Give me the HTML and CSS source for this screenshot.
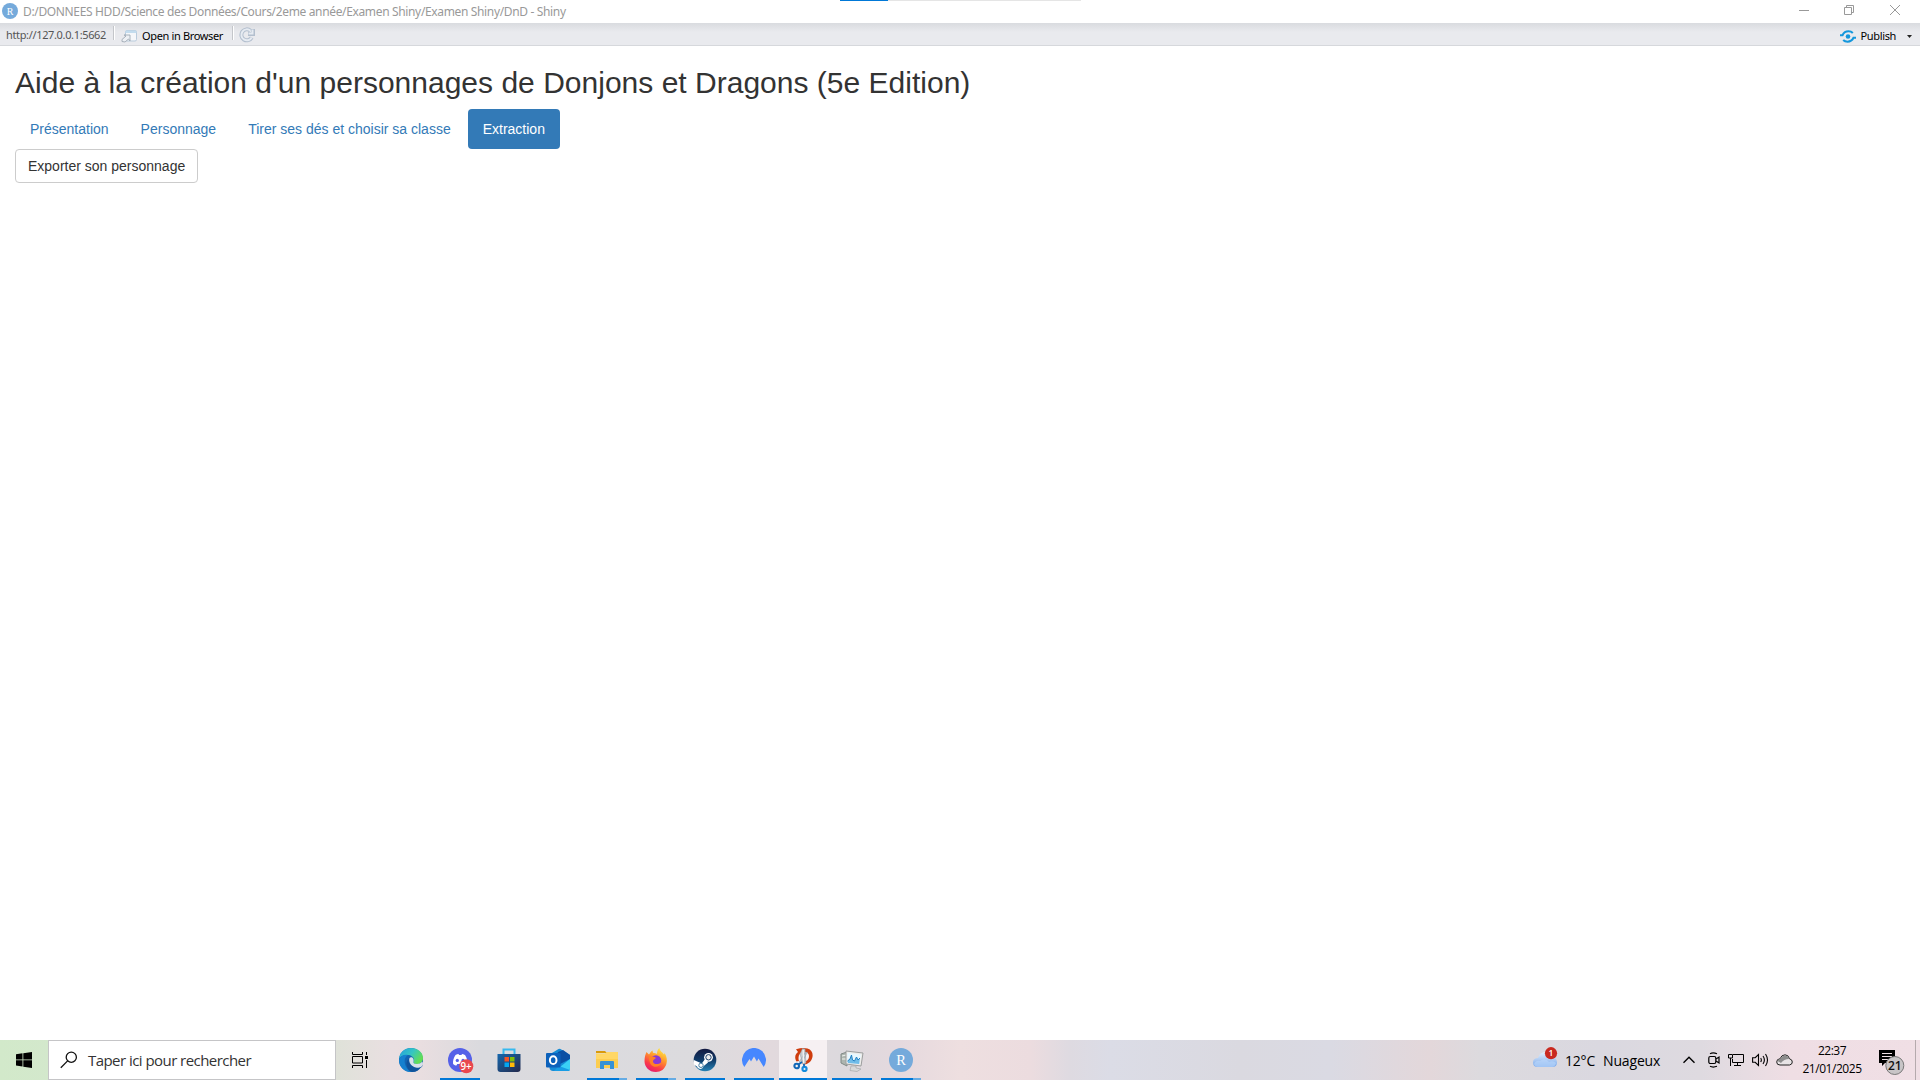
FILE: index.html
```html
<!DOCTYPE html>
<html lang="fr">
<head>
<meta charset="utf-8">
<title>DnD - Shiny</title>
<link rel="stylesheet" href="styles.css">
</head>
<body>
<div class="capture-bar"></div>
<header class="titlebar">
  <svg class="app-icon" width="16" height="16" viewBox="0 0 16 16"><circle cx="8" cy="8" r="8" fill="#75aadb"/><text x="8" y="11.6" text-anchor="middle" class="r-letter" font-size="10">R</text></svg>
  <span class="window-title">D:/DONNEES HDD/Science des Données/Cours/2eme année/Examen Shiny/Examen Shiny/DnD - Shiny</span>
  <div class="window-buttons">
    <svg width="45" height="20" viewBox="0 0 45 20"><path d="M17 10.500h10" stroke="#999"/></svg>
    <svg width="45" height="20" viewBox="0 0 45 20" fill="none" stroke="#999"><path d="M17.500 7.500h7v7h-7zM19.500 7.500v-2h7v7h-2"/></svg>
    <svg width="45" height="20" viewBox="0 0 45 20"><path d="M18 5l10 10M28 5l-10 10" stroke="#999"/></svg>
  </div>
</header>
<div class="toolbar">
  <span class="address">http://127.0.0.1:5662</span>
  <i class="separator"></i>
  <svg class="open-icon" width="17" height="14" viewBox="0 0 17 14"><rect x="4.500" y="1.500" width="11" height="10.500" rx="1.500" fill="#f5f7fa" stroke="#b9cbdc"/><path d="M4.500 4V2.500q0-1 1-1h9q1 0 1 1V4z" fill="#c3dcee"/><path d="M1 12.500v-2l4-3.500-2-1h6v6l-1.500-2-3.500 3z" fill="#edf0f4" stroke="#9fa9b4" stroke-width=".9"/></svg>
  <span class="open-label">Open in Browser</span>
  <i class="separator second"></i>
  <svg class="reload-icon" width="16" height="16" viewBox="0 0 16 16" fill="none"><path d="M12.700 10.500A5.500 5.500 0 1 1 11.500 3.700M14 2v5H9" stroke="#b3bfce" stroke-width="4"/><path d="M12.700 10.500A5.500 5.500 0 1 1 11.500 3.700M13.500 2.500v4H9.500" stroke="#e6ebf2" stroke-width="2"/></svg>
  <div class="publish">
    <svg width="16" height="13" viewBox="0 0 16 13"><circle cx="8" cy="6.500" r="2.300" fill="#1497dc"/><path d="M0 5.200h2.500C3.800 2.500 6 1.300 8.500 1.300c2 0 3.200.6 4.300 1.700M16 7.800h-2.500C12.200 10.500 10 11.700 7.500 11.700c-2 0-3.200-.6-4.300-1.700" fill="none" stroke="#1497dc" stroke-width="2.100"/></svg>
    <span>Publish</span>
    <svg class="caret" width="5" height="3" viewBox="0 0 5 3"><path d="M0 0h5L2.500 3z" fill="#222"/></svg>
  </div>
</div>
<main class="page">
  <h2>Aide à la création d'un personnages de Donjons et Dragons (5e Edition)</h2>
  <nav class="pills">
    <a>Présentation</a><a>Personnage</a><a>Tirer ses dés et choisir sa classe</a><a class="active">Extraction</a>
  </nav>
  <button class="export">Exporter son personnage</button>
</main>
<footer class="taskbar">
  <div class="start"><svg width="16" height="16" viewBox="0 0 16 16"><path d="M0 2.200L6.500 1.300V7.500H0zM7.300 1.200L16 0v7.500H7.300zM0 8.300h6.500v6.200L0 13.600zM7.300 8.300H16V16L7.300 14.700z"/></svg></div>
  <div class="search"><svg width="18" height="18" viewBox="0 0 18 18" fill="none" stroke="#111" stroke-width="1.300"><circle cx="11.300" cy="6.200" r="5.100"/><path d="M7.600 9.900L.8 16.700"/></svg><span>Taper ici pour rechercher</span></div>
  <div class="task-view"><svg width="16" height="16" viewBox="0 0 16 16" fill="none" stroke="#000"><path d="M.5 0v2.500h10V0M.5 4.500h10v6.500H.5zM.5 16v-2.500h10V16M14.500 0v3M14.500 8v8"/><path d="M13 4h3v3h-3z" fill="#000" stroke="none"/></svg></div>
  <div class="apps">
    <div class="app"><svg width="24" height="24" viewBox="0 0 24 24"><defs><linearGradient id="e1" x1="0" y1="0" x2="1" y2=".5"><stop stop-color="#239fe0"/><stop offset=".55" stop-color="#35c5c3"/><stop offset="1" stop-color="#62dd55"/></linearGradient></defs><circle cx="12" cy="12" r="12" fill="#1265b3"/><path d="M0 11C.5 4.500 5.500 0 12 0c7 0 12 4.500 12 10 0 4-3 6-6 6-2.500 0-4-1-3.500-2.300C16 11 14 7.500 9.500 7 5 6.500 1.500 8 0 11z" fill="url(#e1)"/><path d="M0 12c1-4 5-6 9-5-3 2-4 5-3 9 1 4 4 7.500 7 7.900C5 24.500-.3 18 0 12z" fill="#1580cf"/><path d="M11 10c-2.500 5 2 10 8 10 1.500 0 3-.5 4-1l.6-2c-1.500 1-3.500 1.600-6 1.500-3 0-4-1.200-3.500-2.500.6-1.500-.5-3.500-3.100-6z" fill="#10549c"/><path d="M10.500 10c2-1.800 5 .5 4 3.700-.5 1.300 1 2.300 3.500 2.300 2 0 3.800-.8 5-2.200L24 15l-1.200 3.500c-1.500 1-3 1.500-4.800 1.300-5.500-.5-9-6-7.500-9.800z" fill="#d7e0ea"/><path d="M10 10.500c-1.500 4 2 9 7.500 9.500 2 .2 3.700-.4 4.700-1-2 3-4.700 5-9.200 5-5-1.500-8-10-3-13.500z" fill="#10549c"/></svg></div>
    <div class="app running"><svg class="discord" width="26" height="26" viewBox="0 0 26 26"><circle cx="12" cy="12" r="12" fill="#5561e8"/><path d="M7.500 7q2-1 3-.9l.5 1h2.500l.5-1q1 0 3 .9c2 3 2.700 6 2.300 9-1.500 1.100-2.300 1.400-3.300 1.600l-.9-1.600H9.300l-.9 1.600c-1-.2-1.800-.5-3.300-1.600-.4-3 .4-6 2.400-9z" fill="#fff"/><circle cx="9.300" cy="12.400" r="1.600" fill="#5561e8"/><circle cx="15" cy="12.400" r="1.600" fill="#5561e8"/><circle cx="18.300" cy="18.300" r="7" fill="#e9484e"/><text x="18" y="21.800" text-anchor="middle" class="badge-text" font-size="9.800">9+</text></svg></div>
    <div class="app"><svg width="24" height="24" viewBox="0 0 24 24"><defs><linearGradient id="s1" x2="1" y2="1"><stop stop-color="#1567ad"/><stop offset="1" stop-color="#252a4c"/></linearGradient></defs><path d="M6.500 7V1.500h11V7" fill="none" stroke="#36b9ef" stroke-width="2"/><path d="M.5 6h23v15q0 3-3 3h-17q-3 0-3-3z" fill="url(#s1)"/><path d="M7.500 9H12v4.500H7.500z" fill="#f35325"/><path d="M13 9h4.500v4.500H13z" fill="#81bc06"/><path d="M7.500 14.500H12V19H7.500z" fill="#05a6f0"/><path d="M13 14.500h4.500V19H13z" fill="#ffba08"/></svg></div>
    <div class="app"><svg width="24" height="24" viewBox="0 0 24 24"><path d="M3.500 6.500L12.500 1q1-.5 2 0L24 7v13q0 3-3 3H7q-3 0-3.500-3z" fill="#168bd5"/><path d="M12 4l5-2 7 5v4l-10 5-6-4z" fill="#0a4fa4"/><path d="M24 11v9q0 3-3 3H9z" fill="#3ad0f6"/><path d="M13 18l11 4-1 1H8z" fill="#189de5"/><rect y="5" width="14.500" height="14.500" rx="1" fill="#0c61bb"/><ellipse cx="7.200" cy="12.200" rx="3.300" ry="3.900" fill="none" stroke="#fff" stroke-width="2"/></svg></div>
    <div class="app running stacked"><svg width="22" height="20" viewBox="0 0 22 20"><path d="M0 1h9l2 2H0z" fill="#d99a0b"/><path d="M0 3.500h9L11 2h11v16H0z" fill="#ffd766"/><path d="M0 9h22v9H0z" fill="#fccd50"/><path d="M4 19v-7q0-1 1-1h12q1 0 1 1v7h-4v-4H8v4z" fill="#3791d5"/></svg></div>
    <div class="app running stacked"><svg width="24" height="24" viewBox="0 0 24 24"><defs><linearGradient id="f1" x1=".8" y1="0" x2=".3" y2="1"><stop stop-color="#fff14a"/><stop offset=".4" stop-color="#ff9b2b"/><stop offset=".75" stop-color="#fb3c47"/><stop offset="1" stop-color="#e51b72"/></linearGradient></defs><path d="M2.500 4L5 6.500C6 5 7 3.500 8.500 2.500l.5 2.200C10.500 5 12 5 13 6c0-3 1-5 2.500-6 0 3 3 4 4.500 6.500l.6-1.500c2 3 3 7 1.800 11-1.500 5-5.500 8-10.500 8C5 24 .5 19 .5 13 .5 9 1.500 6 2.500 4z" fill="url(#f1)"/><circle cx="12" cy="12.500" r="5.200" fill="#8a38d5"/><path d="M5 9c4-.5 6 0 7 1-2 1.500-3 2-3 3.200 0 3 4 4 8.500 1.300-2 5.500-8.500 5.500-11 1.500C5.500 14 5 11 5 9z" fill="#ff8126"/></svg></div>
    <div class="app running"><svg width="24" height="24" viewBox="0 0 24 24"><defs><linearGradient id="t1" x2="0" y2="1"><stop stop-color="#11183f"/><stop offset=".5" stop-color="#103b69"/><stop offset="1" stop-color="#2783b5"/></linearGradient></defs><circle cx="12" cy="12" r="11.300" fill="url(#t1)"/><path d="M.8 12l8 3.500 4-5.500L15 14.500l-4.500 3.800c-1 4-5.500 3-6.500.2L.9 16.500z" fill="#fff"/><circle cx="8" cy="17.300" r="2.200" fill="none" stroke="#1f638f" stroke-width=".8"/><circle cx="15.500" cy="9.300" r="4.400" fill="#fff"/><circle cx="15.500" cy="9.300" r="2.700" fill="#eee" stroke="#173c68" stroke-width="1"/></svg></div>
    <div class="app running"><svg width="24" height="24" viewBox="0 0 24 24"><path d="M2.300 19A12 12 0 1 1 21.700 19L16.500 10.500 14.900 13.500 15.800 15 12 8.500 9 13.500 7.500 11z" fill="#4687ff"/></svg></div>
    <div class="app running focused"><svg width="24" height="24" viewBox="0 0 24 24"><g transform="translate(2 0)"><path d="M3 1.200Q10-.6 14.500.6c5 1.500 6 6 4.500 9.900-1.500 4-5 6-9 6L9 13.500c4 .5 7-1.500 7-5.500 0-3-3-4.500-6-4-3.500.6-5.500 4.500-4 9l-2.500.5C1 9 2.500 6 5 4z" fill="#cf3c0c"/><path d="M9.500.5L12 1l1 14-3 1.500L7 6zM14.500 4l-6 11-2.500-1 6-9z" fill="#c5c9cd" stroke="#8d969e" stroke-width=".5"/><path d="M10.200 2l.3 13" stroke="#f0f2f3" stroke-width="1.300"/><circle cx="3.700" cy="18" r="2.300" fill="none" stroke="#1267b6" stroke-width="2.100"/><circle cx="11.500" cy="21" r="2.100" fill="none" stroke="#158bdd" stroke-width="2.100"/><path d="M5.500 16.500l3.500-2.500M11 18.500V16" stroke="#1267b6" stroke-width="1.800"/></g></svg></div>
    <div class="app running"><svg width="24" height="24" viewBox="0 0 24 24"><path d="M1 6l6-2v14l-6-3z" fill="#adb5af" stroke="#818a87"/><path d="M2 8l4-1M2 11h4" stroke="#eef2ed"/><path d="M6 3l17 2-2 13-15-2z" fill="#ededeb" stroke="#9c9e9e"/><path d="M7.500 5l13.500 1.500-1.500 9.500-12-1.500z" fill="#e8f8ff"/><path d="M7.500 13l2.500-2 1.500-4 1 5 2 1 2-4 1.500 3 2-2-.8 6-11.200-1z" fill="#6fbce8"/><path d="M7.500 13l2.500-2 1.500-4 1 5 2 1 2-4 1.500 3 2-2" fill="none" stroke="#2381c3"/><path d="M11 18h5v2l5 1-4 2.500-7-1z" fill="#d7d9d9" stroke="#a6a9aa" stroke-width=".7"/></svg></div>
    <div class="app running stacked"><svg width="24" height="24" viewBox="0 0 24 24"><circle cx="12" cy="12" r="12" fill="#75aadb"/><text x="12" y="17" text-anchor="middle" class="r-letter" font-size="14.500">R</text></svg></div>
  </div>
  <div class="tray">
    <div class="weather"><svg width="25" height="22" viewBox="0 0 25 22"><defs><linearGradient id="w1" x2="0" y2="1"><stop stop-color="#e5f1fd"/><stop offset="1" stop-color="#78a8eb"/></linearGradient></defs><path d="M5 20q-5 0-5-4.500T5 11q1.500-6 8-6 5 0 6.500 5Q24 11 24 15.500T19 20z" fill="url(#w1)"/><path d="M1 17q2-4 6-3 5-4 9 1 4-2 7 1-1 4-4 4H5q-3 0-4-3z" fill="#b8d5fa" opacity=".65"/><circle cx="18" cy="6.200" r="6.100" fill="#c92a20"/><text x="18" y="9.200" text-anchor="middle" class="badge-text" font-size="8.500">1</text></svg><span class="degrees">12°C</span><span class="condition">Nuageux</span></div>
    <svg class="chevron" width="12" height="8" viewBox="0 0 12 8"><path d="M.5 6.800L6 1.300l5.500 5.500" fill="none" stroke="#000" stroke-width="1.400"/></svg>
    <svg class="camera" width="12" height="16" viewBox="0 0 12 16" fill="none" stroke="#000" stroke-width="1.200"><rect x=".8" y="4.500" width="7" height="7" rx="1.500"/><path d="M8 7l3-2v6L8 9M2 1.700q3-1.500 7 0M2 14.300q3 1.500 7 0"/></svg>
    <svg class="network" width="16" height="14" viewBox="0 0 16 14" fill="none" stroke="#000"><path d="M5 1.500h10.500v8H4.500V6M9.500 9.500v3M6 12.500h7M.5 1.500h4V5h-4zM2.500 5v8"/></svg>
    <svg class="volume" width="17" height="14" viewBox="0 0 17 14" fill="none" stroke="#000" stroke-width="1.100"><path d="M.6 4.700h2.600L6.500 1.500v11L3.200 9.300H.6zM8.700 5q1.300 2 0 4M11 3q2.800 4 0 8M13.500 1q4 6 0 12"/></svg>
    <svg class="cloud" width="17" height="12" viewBox="0 0 17 12"><path d="M4 11Q.7 11 .7 8T4 4.800Q5.500.8 9 .8q3.500 0 4.500 4Q16.300 5.500 16.300 8T13.500 11z" fill="#e7e3e5" stroke="#222"/><path d="M1.500 7q1-2 3-2Q6 1.500 9 1.500q3 0 4 3.500-5 0-8 4z" fill="#8d8d8d"/></svg>
    <div class="clock"><span class="time">22:37</span><span class="date">21/01/2025</span></div>
    <svg class="notice" width="26" height="25" viewBox="0 0 26 25"><path d="M0 0h16v13H6l-3 3v-3H0z"/><path d="M3 3.500h10M3 6.500h10M3 9.500h7" stroke="#efdfe4"/><circle cx="15.800" cy="15.500" r="9" fill="#c8c5c7" stroke="#777"/><text x="15.800" y="19.800" text-anchor="middle" class="count" font-size="12">21</text></svg>
    <div class="desktop-edge"></div>
  </div>
</footer>
</body>
</html>
```
FILE: styles.css
```css
* { box-sizing: border-box; }
body { margin: 0; width: 1920px; height: 1080px; overflow: hidden; display: flex; flex-direction: column; background: #fff; color: #333; font-family: "Liberation Sans", Arial, sans-serif; }
svg { display: block; flex: none; }
span, a, button, h2 { white-space: nowrap; }
.capture-bar { position: absolute; top: 0; left: 840px; width: 241px; height: 1px; background: linear-gradient(90deg, #0078d7 48px, #e5e5e5 48px); }
.titlebar { height: 23px; display: flex; align-items: flex-start; padding: 0 3px 0 2px; font: 12px/23px "Noto Sans", sans-serif; color: #999; }
.app-icon { margin: 3px 5px 0 0; }
.window-title { letter-spacing: -.35px; }
.window-buttons { display: flex; margin-left: auto; }
.r-letter { font-family: "Liberation Serif", serif; fill: #fff; }
.badge-text { font-family: "Open Sans", sans-serif; font-weight: 600; fill: #fff; }
.count { font-family: "Open Sans", sans-serif; font-weight: 600; fill: #111; }
.toolbar { height: 23px; display: flex; align-items: flex-start; padding: 3px 6px 0; background: linear-gradient(#d9dbdf, #e9eaee 9px); border-bottom: 1px solid #d6d8dc; font: 11px/18px "Noto Sans", sans-serif; letter-spacing: -.35px; color: #000; }
.address { width: 107px; color: #555; }
.separator { width: 2px; height: 14px; background: #c4c6ca; border-right: 1px solid #fff; }
.open-icon { margin: 3px 4px 0 6px; }
.open-label { width: 90px; line-height: 20px; }
.reload-icon { margin: 1px 0 0 5px; }
.publish { display: flex; align-items: center; margin-left: auto; gap: 4px; line-height: 20px; }
.publish .caret { margin: 0 2px 0 7px; }
.page { flex: 1; display: flex; flex-direction: column; align-items: flex-start; padding: 20px 15px 0; }
h2 { margin: 0 0 10px; font-size: 30px; line-height: 33px; font-weight: 500; letter-spacing: .01px; }
.pills { display: flex; gap: 2px; }
.pills a { padding: 10px 15px; border-radius: 4px; font-size: 14px; line-height: 20px; color: #337ab7; }
.pills .active { background: #337ab7; color: #fff; }
.export { height: 34px; padding: 6px 12px; border: 1px solid #ccc; border-radius: 4px; background: #fff; color: #333; font: 14px/20px "Liberation Sans", Arial, sans-serif; }
.taskbar { height: 40px; display: flex; color: #000; font-family: "Open Sans", sans-serif; background: linear-gradient(90deg, #d2e9ca 0, #d3e8cc 50px, #dfe2d9 336px, #e9dfe1 390px, #e9dee0 420px, #dadade 480px, #dcdbde 700px, #e2d9dd 770px, #dcd9dd 840px, #e5d9de 900px, #eedfe0 960px, #ecdcdf 1030px, #dedae1 1070px, #dbdce6 1110px, #dad9e0 1240px, #dadae3 1330px, #e3d7da 1430px, #dcdade 1480px, #dad8e0 1600px, #dedae0 1700px, #efdee4 1790px, #f0dfe5 1920px); }
.start { width: 48px; display: grid; place-items: center; }
.search { width: 288px; display: flex; align-items: center; padding-left: 11px; border: 1px solid #c5c5c7; background: #fff; color: #333; font-size: 15px; }
.search span { margin-left: 10px; letter-spacing: -.55px; }
.task-view { width: 51px; padding: 12px 0 0 16px; }
.apps { display: flex; gap: 1px; }
.app { width: 48px; height: 40px; display: grid; place-items: center; background: no-repeat 4px 38px / 40px 2px; }
.discord { margin: 2px 0 0 2px; }
.running { background-image: linear-gradient(#0078d7, #0078d7); }
.stacked { background-image: linear-gradient(90deg, #0078d7 32px, #66ace4 32px); }
.focused { background: linear-gradient(#f6f0f2 38px, #0078d7 38px); }
.tray { margin-left: auto; display: flex; align-items: center; font-size: 14px; }
.weather { display: flex; align-items: center; margin-right: 24px; }
.weather svg { margin: -4px 7px 0 0; }
.degrees { width: 38px; letter-spacing: -.2px; }
.condition { width: 56px; letter-spacing: -.15px; }
.chevron { margin-right: 13px; }
.camera { margin-right: 8px; }
.network { margin-right: 8px; }
.volume { margin-right: 7px; }
.cloud { margin-right: 9px; }
.clock { width: 60px; display: flex; flex-direction: column; align-items: center; font-size: 12px; line-height: 18px; }
.time { letter-spacing: -.5px; }
.date { letter-spacing: -.45px; }
.notice { margin: 5px 10px 0 17px; }
.desktop-edge { width: 5px; height: 40px; border-left: 1px solid #b5aaad; }
```
